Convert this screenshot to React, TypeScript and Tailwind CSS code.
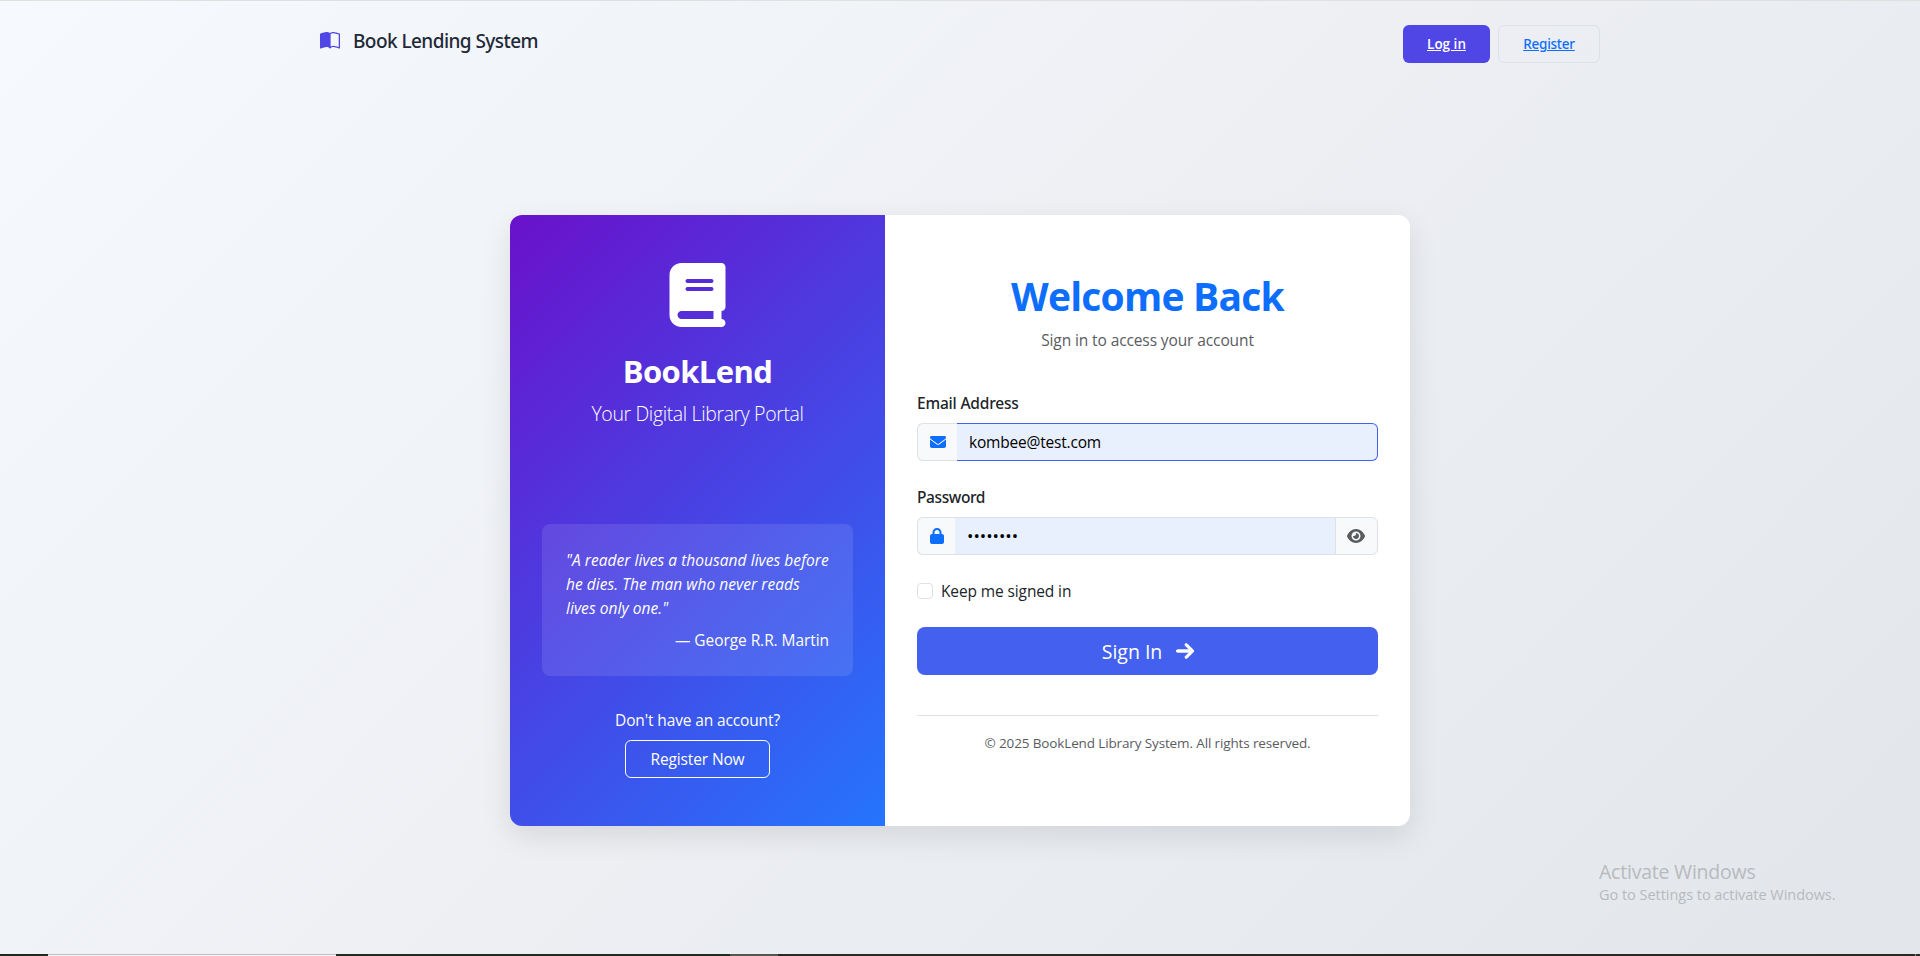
import React from "react";
import { FaBook, FaEnvelope, FaLock, FaEye, FaArrowRight } from "react-icons/fa6";
import { BsBookHalf } from "react-icons/bs";

function Header() {
  return (
    <header className="mx-auto flex w-[1280px] items-start justify-between pt-[23px]">
      <div className="flex items-center gap-[13px] pt-[2px]">
        <BsBookHalf className="size-5 text-[#4f46e5]" />
        <span className="font-['Noto_Sans',sans-serif] text-[19px] leading-[30px] font-medium tracking-[-0.56px] whitespace-nowrap text-[#1f2937]">
          Book Lending System
        </span>
      </div>
      <nav className="flex gap-2 pt-px text-[13.5px]">
        <a className="flex h-[38px] w-[87px] items-center justify-center rounded-md bg-[#4f46e5] font-semibold text-white underline">
          Log in
        </a>
        <a className="flex h-[38px] w-[102px] items-center justify-center rounded-md border border-[#dee2e6] pt-px font-['Noto_Sans',sans-serif] font-medium tracking-[-0.25px] text-[#0d6efd] underline">
          Register
        </a>
      </nav>
    </header>
  );
}

function BrandPanel() {
  return (
    <section className="flex w-[375px] flex-col items-center bg-[linear-gradient(135deg,#6a11cb_0%,#2575fc_100%)] px-8 pt-12 text-white">
      <FaBook className="h-16 w-[57px]" />
      <h1 className="mt-[25px] text-[31px] leading-[38px] font-bold tracking-[-0.6px]">BookLend</h1>
      <p className="mt-[9px] text-[19.5px] leading-[30px] font-light tracking-[-0.37px] whitespace-nowrap">Your Digital Library Portal</p>
      <blockquote className="mt-[95px] h-[152px] w-[311px] rounded-lg bg-white/10 p-6 leading-6">
        <p className="tracking-[0.05px] whitespace-nowrap italic">
          "A reader lives a thousand lives before
          <br />
          he dies. The man who never reads
          <br />
          lives only one."
        </p>
        <p className="mt-2 text-right tracking-[-0.07px]">— George R.R. Martin</p>
      </blockquote>
      <p className="mt-8 leading-6 tracking-[-0.13px]">Don't have an account?</p>
      <button className="mt-2 h-[38px] w-[145px] rounded-md border border-white pt-0.5 tracking-[-0.13px]">Register Now</button>
    </section>
  );
}

function LoginForm() {
  return (
    <section className="flex w-[525px] flex-col px-8 pt-[57px]">
      <h2 className="text-center text-[39px] leading-[48px] font-bold tracking-[-0.78px] text-[#0d6efd]">Welcome Back</h2>
      <p className="mt-2 text-center leading-6 tracking-[-0.11px] text-[#595c5f]">Sign in to access your account</p>

      <label className="mt-[39px] font-['Noto_Sans',sans-serif] leading-6 font-medium tracking-[-0.2px] text-[#212529]">Email Address</label>
      <div className="mt-2 flex h-[38px]">
        <span className="flex w-10 items-center rounded-l-md border border-r-0 border-[#dee2e6] bg-[#f8f9fa] pl-3 text-[#0d6efd]">
          <FaEnvelope className="size-4" />
        </span>
        <div className="flex flex-1 items-center rounded-r-md border border-l-0 border-[#4361ee] bg-[#e8f0fe] pt-0.5 pl-3 tracking-[-0.2px] text-black">
          kombee@test.com
        </div>
      </div>

      <label className="mt-6 font-['Noto_Sans',sans-serif] leading-6 font-medium tracking-[-0.4px] text-[#212529]">Password</label>
      <div className="mt-2 flex h-[38px]">
        <span className="flex w-[38px] items-center rounded-l-md border border-r-0 border-[#dee2e6] bg-[#f8f9fa] pl-3 text-[#0d6efd]">
          <FaLock className="h-4 w-3.5" />
        </span>
        <div className="flex flex-1 items-center border-y border-[#dee2e6] bg-[#e8f0fe] pl-3 text-[17px] text-black">
          ••••••••
        </div>
        <span className="flex w-[43px] items-center justify-center rounded-r-md border border-[#dee2e6] bg-[#f8f9fa] pr-px text-[#595c5f]">
          <FaEye className="h-4 w-[18px]" />
        </span>
      </div>

      <div className="mt-6 flex h-6 items-center gap-2">
        <span className="size-4 rounded border border-[#dee2e6] bg-white" />
        <span className="pt-0.5 tracking-[-0.12px] text-[#212529]">Keep me signed in</span>
      </div>

      <button className="mt-6 flex h-12 items-center justify-center rounded-lg bg-[#4361ee] pt-0.5 pl-0.5 text-[19.5px] tracking-[-0.02px] text-white">
        Sign In
        <FaArrowRight className="mb-0.5 ml-[13px] size-5 stroke-white [stroke-width:22]" />
      </button>

      <hr className="mt-10 border-[#dee2e6]" />
      <p className="mt-[17px] text-center text-[13.5px] leading-[21px] tracking-[-0.13px] whitespace-nowrap text-[#595c5f]">
        © 2025 BookLend Library System. All rights reserved.
      </p>
    </section>
  );
}

export default function App() {
  return (
    <div className="relative flex h-[956px] w-[1920px] flex-col overflow-hidden border-t border-[#dfe0e0] bg-[linear-gradient(135deg,#f6f9fd_0%,#edeff3_50%,#e2e6eb_100%)] font-['Open_Sans','Noto_Sans',sans-serif] text-[15.5px]">
      <Header />
      <main className="mx-auto mt-[152px] flex h-[611px] w-[900px] overflow-hidden rounded-xl bg-white shadow-[0_10px_30px_rgba(0,0,0,0.1)]">
        <BrandPanel />
        <LoginForm />
      </main>
      <div className="absolute top-[856px] left-[1599px] whitespace-nowrap text-[#b7babd]">
        <p className="text-[19.5px] leading-[30px] tracking-[-0.22px]">Activate Windows</p>
        <p className="-mt-[3px] text-[14.5px] leading-[22px] tracking-[-0.03px]">Go to Settings to activate Windows.</p>
      </div>
      <div className="absolute inset-x-0 bottom-0 flex h-0.5 bg-[#2b2a1c]">
        <span className="w-12 bg-[#1d2a18]" />
        <span className="w-72 border-t border-[#bfbfbf] bg-[#f5f5f5]" />
        <span className="w-[394px] bg-[#1f2d1a]" />
        <span className="w-12 bg-[#57584a]" />
        <span className="mr-1 ml-auto w-px bg-[#8a8a80]" />
      </div>
    </div>
  );
}
